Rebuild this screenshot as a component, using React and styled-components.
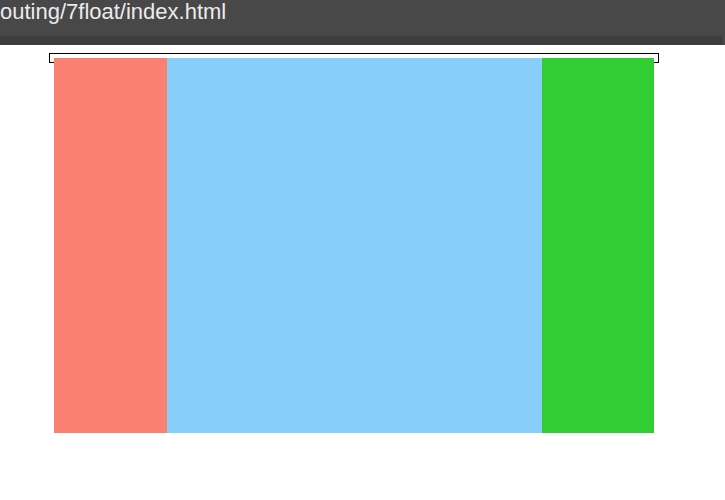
import styled, { createGlobalStyle } from 'styled-components';

const GlobalStyle = createGlobalStyle`
  body {
    margin: 0;
    background: #ffffff;
    font-family: "Liberation Sans", Arial, sans-serif;
  }
`;

const TitleBar = styled.div`
  height: 36px;
  background: #484848;
  overflow: hidden;
`;

const TitleText = styled.div`
  color: #ececec;
  font-size: 22px;
  line-height: 24px;
  white-space: nowrap;
`;

const ToolStrip = styled.div`
  height: 9px;
  background: #3e3e3e;
  border-right: 2px solid #4a4a4a;
`;

const Page = styled.div`
  padding: 8px 0 0 49px;
`;

// floated columns inside a box whose height collapses
const FloatBox = styled.div`
  width: 600px;
  padding: 4px;
  border: 1px solid #000;
`;

const Column = styled.div`
  float: left;
  width: ${(props) => props.width}px;
  height: 375px;
  background: ${(props) => props.color};
`;

function App() {
  return (
    <>
      <GlobalStyle />
      <TitleBar>
        <TitleText>outing/7float/index.html</TitleText>
      </TitleBar>
      <ToolStrip />
      <Page>
        <FloatBox>
          <Column width={113} color='salmon' />
          <Column width={375} color='lightskyblue' />
          <Column width={112} color='limegreen' />
        </FloatBox>
      </Page>
    </>
  );
}

export default App;
